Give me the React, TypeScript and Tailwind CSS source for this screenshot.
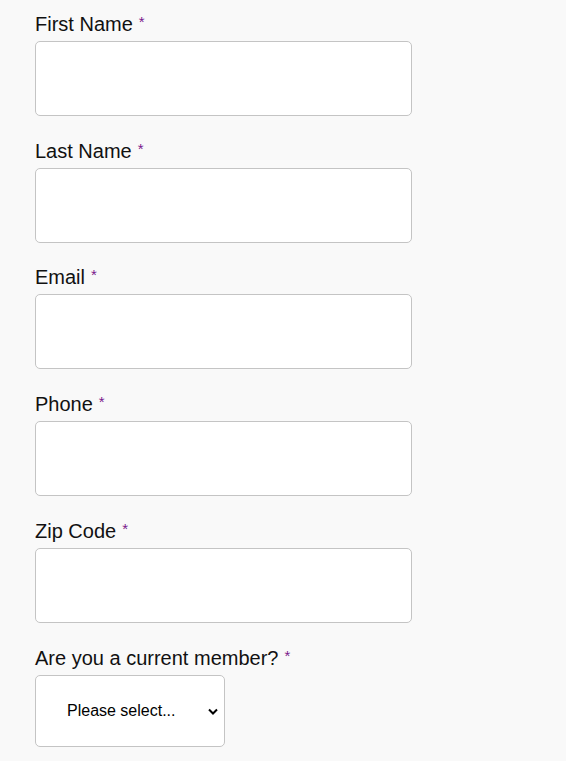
import React from "react";

const fields = ["First Name", "Last Name", "Email", "Phone", "Zip Code"];

function Label({ text }: { text: string }) {
  return (
    <label className="block text-[20px] leading-[23px] text-[#111] mb-[5px]">
      {text}
      <span className="relative -top-[4px] text-[15px] leading-none text-[#7b1a8c] ml-[6px]">*</span>
    </label>
  );
}

export default function App() {
  return (
    <div
      className="min-h-[761px] w-full bg-[#f9f9f9] pl-[35px] pt-[12.9px]"
      style={{ fontFamily: '"Liberation Sans", Arial, sans-serif' }}
    >
      {fields.map((f) => (
        <div key={f} className="mb-[23.75px]">
          <Label text={f} />
          <input
            type="text"
            className="block w-[377px] h-[75px] bg-white border border-[#c4c4c4] rounded-[5px] outline-none"
          />
        </div>
      ))}
      <div>
        <Label text="Are you a current member?" />
        <div className="relative w-[190px] h-[72px]">
          <select className="appearance-none w-full h-full bg-white border border-[#c4c4c4] rounded-[5px] pl-[31px] pr-[20px] text-[16px] text-black outline-none">
            <option>Please select...</option>
            <option>Yes</option>
            <option>No</option>
          </select>
          <svg
            className="absolute right-[7px] top-[33px] pointer-events-none"
            width="10"
            height="7"
            viewBox="0 0 10 7"
          >
            <path d="M1 1.5 L5 5.5 L9 1.5" fill="none" stroke="#000" strokeWidth="2" />
          </svg>
        </div>
      </div>
    </div>
  );
}
